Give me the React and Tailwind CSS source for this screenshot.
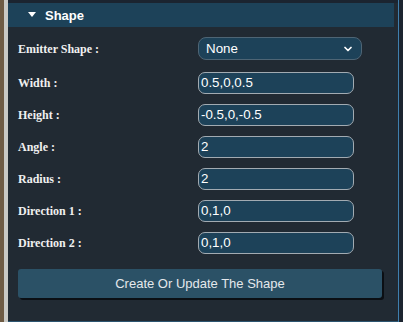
import { ChevronDown } from 'lucide-react';

const campos = [
  { label: 'Width :', value: '0.5,0,0.5' },
  { label: 'Height :', value: '-0.5,0,-0.5' },
  { label: 'Angle :', value: '2' },
  { label: 'Radius :', value: '2' },
  { label: 'Direction 1 :', value: '0,1,0' },
  { label: 'Direction 2 :', value: '0,1,0' },
];

const serif = { fontFamily: '"Liberation Serif", "Times New Roman", serif' };
const sans = { fontFamily: '"Liberation Sans", Arial, sans-serif' };

export default function App() {
  return (
    <div className="w-[403px] h-[322px] flex bg-[#1c2530] overflow-hidden">
      {/* borde izquierdo: madera + gris */}
      <div className="w-[4px] bg-[#6e5b44]" />
      <div className="w-[4px] bg-[#c9c9c5]" />

      <div className="w-[390px] flex flex-col bg-[#212a33] border-t-[3px] border-[#1b2430] border-b border-b-[#2c5570]">
        <div className="h-[24px] mr-[4px] bg-[#1d4259] flex items-center pl-[20px] gap-[9px]" style={sans}>
          <svg width="8" height="6" viewBox="0 0 8 6" className="ml-[0px]">
            <path d="M0 0 L8 0 L4 5 Z" fill="#ffffff" />
          </svg>
          <span className="text-white font-bold text-[13px] leading-none">Shape</span>
        </div>

        <div className="flex flex-col pl-[10px] pt-[10px]">
          <div className="flex items-center h-[23px]">
            <span className="w-[180px] text-[12px] font-bold text-[#f0f0f0]" style={serif}>
              Emitter Shape :
            </span>
            <div
              className="w-[164px] h-[23px] rounded-[8px] border border-[#4e6575] bg-[#1d4259] flex items-center justify-between pl-[7px] pr-[7px] text-[13.33px] text-white"
              style={sans}
            >
              <span>None</span>
              <ChevronDown size={12} strokeWidth={3.5} className="text-white" />
            </div>
          </div>

          <div className="flex flex-col gap-[10px] mt-[12px]">
            {campos.map((c) => (
              <div key={c.label} className="flex items-center h-[22px]">
                <span className="w-[180px] text-[12px] font-bold text-[#f0f0f0]" style={serif}>
                  {c.label}
                </span>
                <div
                  className="w-[156px] h-[22px] rounded-[7px] border border-[#a2abb2] bg-[#1d4259] flex items-center pl-[2px] text-[13.33px] text-white"
                  style={sans}
                >
                  {c.value}
                </div>
              </div>
            ))}
          </div>

          <button
            type="button"
            className="mt-[15px] w-[364px] h-[29px] rounded-[3px] bg-[#2b5166] text-[#e4e8ec] text-[13px] shadow-[2px_2px_0_#0b0f14]"
            style={sans}
          >
            Create Or Update The Shape
          </button>
        </div>
      </div>

      <div className="w-[1px] bg-[#3f7fae]" />
      <div className="flex-1 bg-[#1c2530]" />
    </div>
  );
}
